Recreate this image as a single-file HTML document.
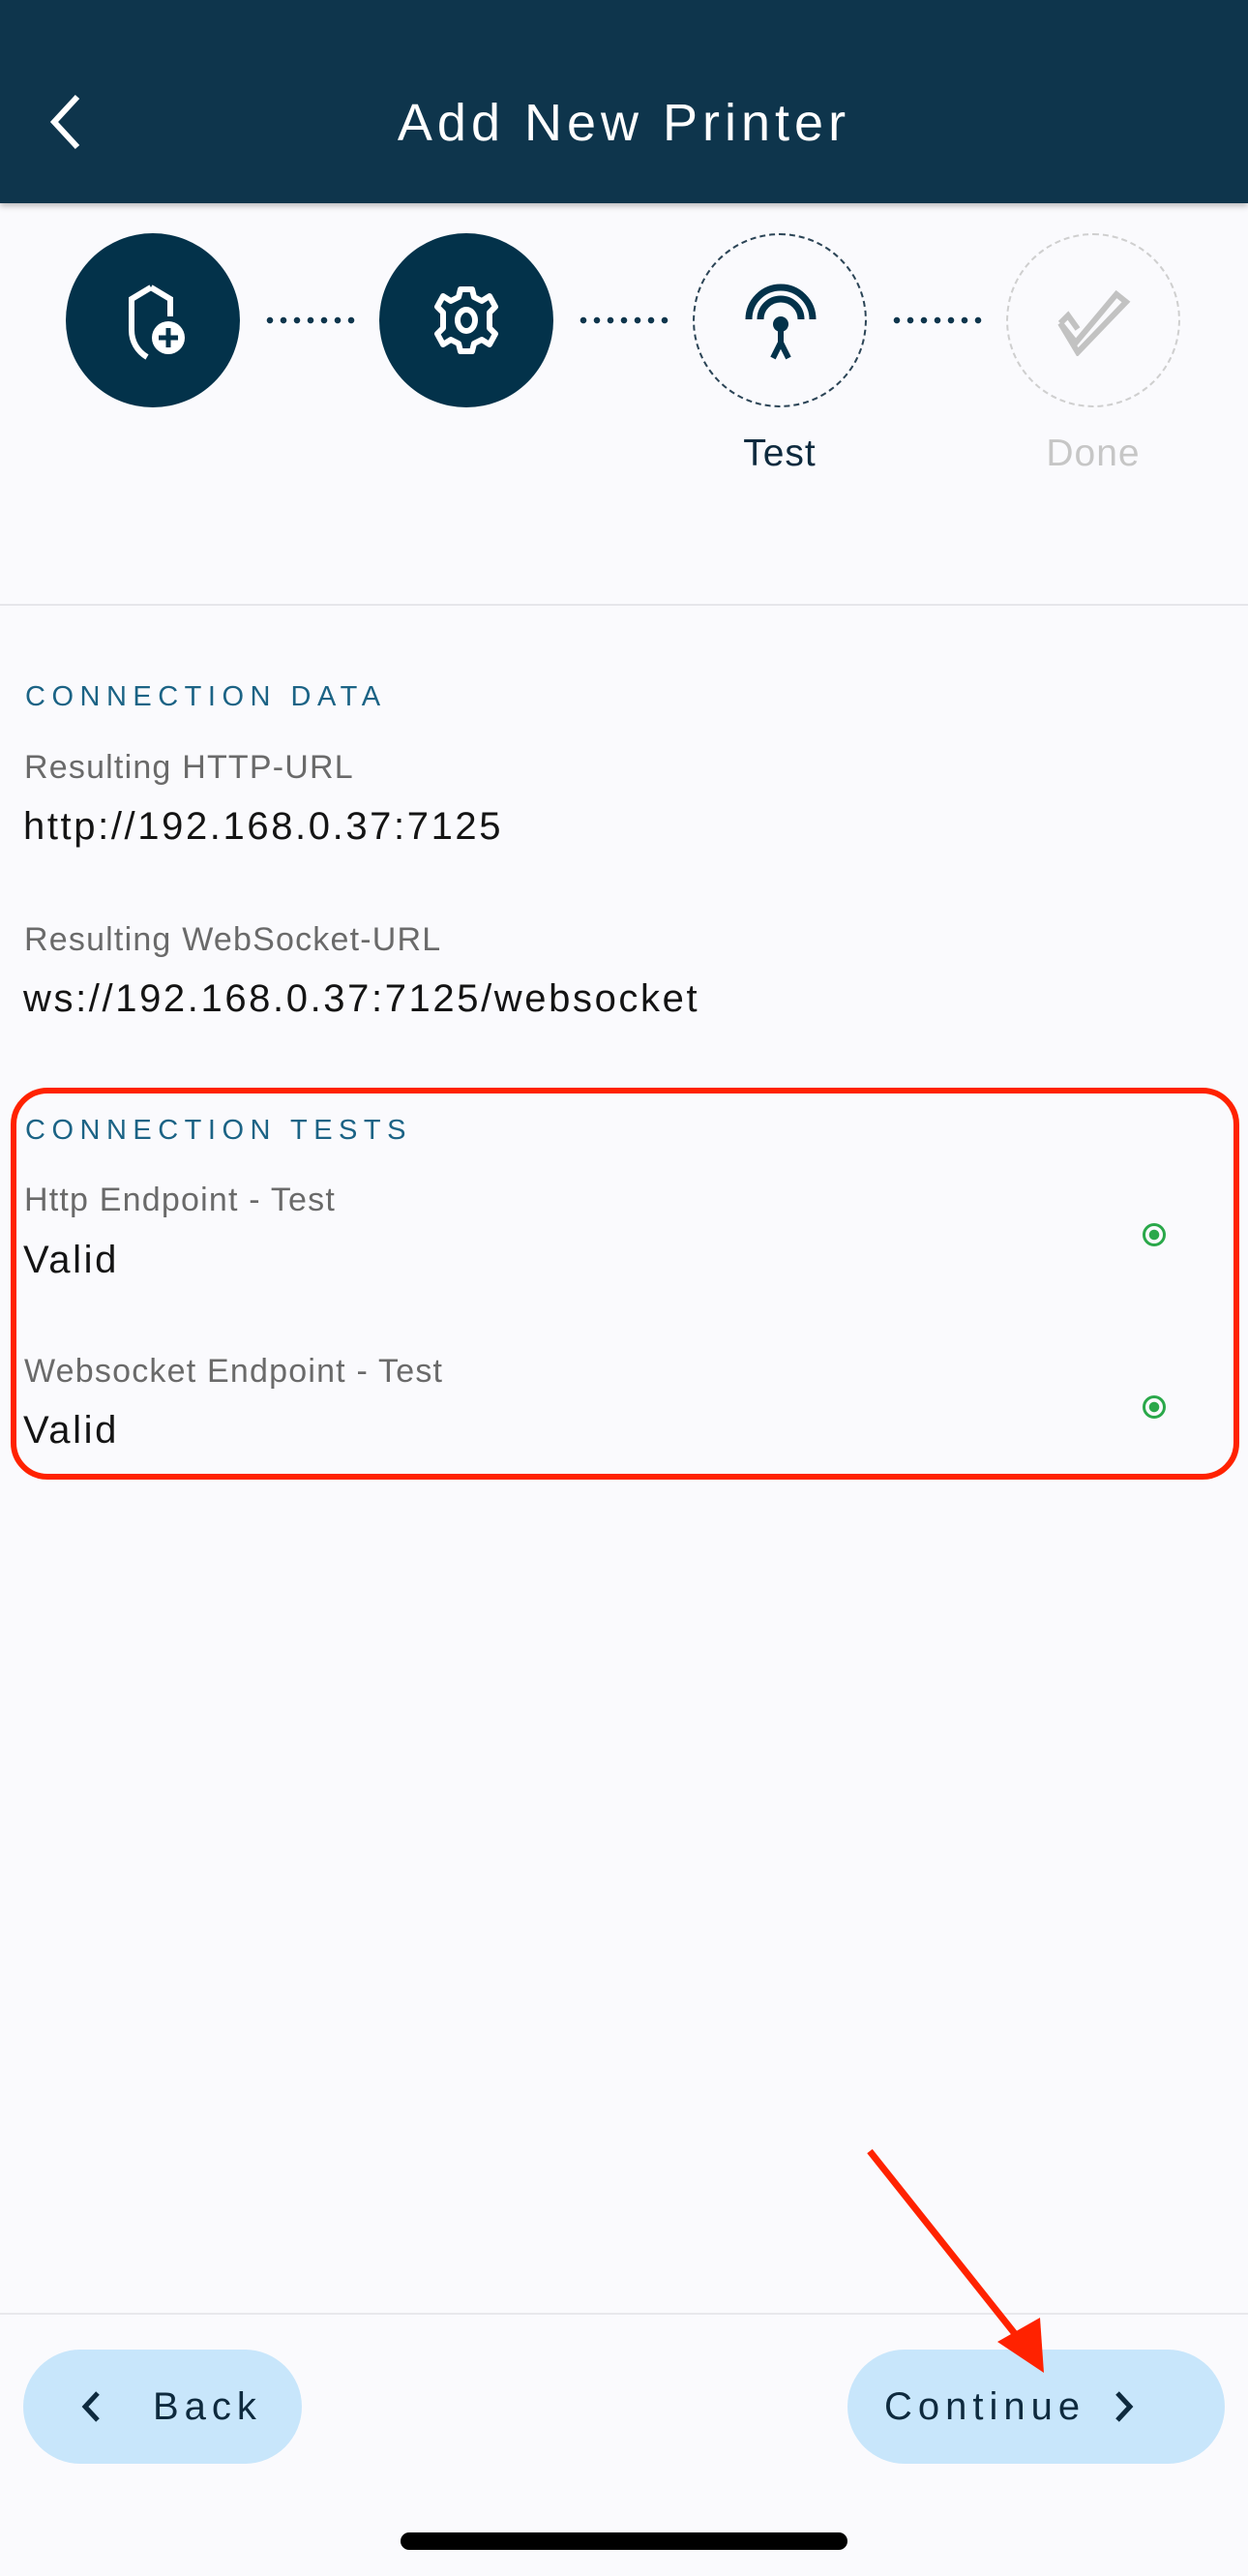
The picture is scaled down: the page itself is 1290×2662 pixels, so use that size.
<!DOCTYPE html>
<html><head><meta charset="utf-8">
<style>
*{margin:0;padding:0;box-sizing:border-box}
body{width:1290px;height:2662px;background:#fafafd;font-family:"Liberation Sans",sans-serif;position:relative;overflow:hidden}
.abs{position:absolute}
.hdr{left:0;top:0;width:1290px;height:210px;background:#0e354c;box-shadow:0 3px 6px rgba(0,0,0,.25)}
.title{left:0;width:1290px;top:96px;text-align:center;color:#fff;font-size:54px;line-height:62px;letter-spacing:5px}
.circ{width:180px;height:180px;border-radius:50%;top:241px}
.dots{top:327px;width:100px;height:8px;background:radial-gradient(circle,#0e354c 3px,transparent 3.5px) 0 0/14px 8px repeat-x}
.lbl{top:446px;width:200px;text-align:center;font-size:39px;line-height:46px;letter-spacing:1px}
.sec{left:26px;color:#1b6385;font-size:29px;letter-spacing:6.5px;line-height:34px}
.k{left:25px;color:#6a6a6a;font-size:34px;line-height:40px;letter-spacing:1.2px}
.v{left:24px;color:#141414;font-size:40px;line-height:48px;letter-spacing:2.6px}
.dot{left:1181px;width:24px;height:24px;border-radius:50%;border:3px solid #2aa84a;background:radial-gradient(circle,#2aa84a 5px,transparent 5.5px)}
.btn{top:2428px;height:118px;border-radius:59px;background:#c8e6fb;color:#0e2a3e;font-size:40px;letter-spacing:6px;display:flex;align-items:center}
</style></head><body>
<div class="abs hdr"></div>
<svg class="abs" style="left:44px;top:96px" width="44" height="60" viewBox="0 0 44 60"><path d="M36 4 L12 30 L36 56" stroke="#fff" stroke-width="6" fill="none"/></svg>
<div class="abs title">Add New Printer</div>

<div class="abs circ" style="left:68px;background:#03324a"></div>
<svg class="abs" style="left:128px;top:293px" width="70" height="80" viewBox="0 0 70 80">
<path d="M28 4 L8 16 V48 C8 60 14 70 24 76" stroke="#fff" stroke-width="6" fill="none"/>
<path d="M28 4 L48 16 V34" stroke="#fff" stroke-width="6" fill="none"/>
<circle cx="46" cy="56" r="17" fill="#fff"/>
<path d="M46 46 V66 M36 56 H56" stroke="#03324a" stroke-width="5"/>
</svg>
<div class="abs dots" style="left:272px"></div>
<div class="abs circ" style="left:392px;background:#03324a"></div>
<svg class="abs" style="left:448px;top:295px" width="68" height="72" viewBox="0 0 68 72">
<g transform="translate(34 36)" fill="none" stroke="#fff" stroke-width="6" stroke-linejoin="round">
<path d="M-6 -32 H6 L8 -24 L16 -20 L24 -25 L30 -14 L24 -8 V8 L30 14 L24 25 L16 20 L8 24 L6 32 H-6 L-8 24 L-16 20 L-24 25 L-30 14 L-24 8 V-8 L-30 -14 L-24 -25 L-16 -20 L-8 -24 Z"/>
<ellipse cx="0" cy="0" rx="9" ry="11"/>
</g></svg>
<div class="abs dots" style="left:596px"></div>
<div class="abs circ" style="left:716px;border:2px dashed #2b4456"></div>
<svg class="abs" style="left:770px;top:290px" width="74" height="88" viewBox="0 0 74 88">
<path d="M4 40 A33 33 0 0 1 70 40" stroke="#03324a" stroke-width="7" fill="none"/>
<path d="M16 40 A21 21 0 0 1 58 40" stroke="#03324a" stroke-width="7" fill="none"/>
<circle cx="37" cy="45" r="8" fill="#03324a"/>
<path d="M37 50 V66 M37 64 L29 80 M37 64 L45 80" stroke="#03324a" stroke-width="6" fill="none"/>
</svg>
<div class="abs dots" style="left:920px"></div>
<div class="abs circ" style="left:1040px;border:2px dashed #cfcfcf"></div>
<svg class="abs" style="left:1088px;top:296px" width="84" height="72" viewBox="0 0 84 72">
<path d="M8 38 L24 58 L66 8 L76 16 L26 68 Z M8 38 L16 30 L26 44" stroke="#c2c2c2" stroke-width="6" fill="none" stroke-linejoin="miter"/>
</svg>
<div class="abs lbl" style="left:706px;color:#0e2a3e">Test</div>
<div class="abs lbl" style="left:1030px;color:#c6c6c6">Done</div>

<div class="abs" style="left:0;top:624px;width:1290px;height:2px;background:#e6e6ea"></div>

<div class="abs sec" style="top:703px">CONNECTION DATA</div>
<div class="abs k" style="top:773px">Resulting HTTP-URL</div>
<div class="abs v" style="top:830px">http://192.168.0.37:7125</div>
<div class="abs k" style="top:951px">Resulting WebSocket-URL</div>
<div class="abs v" style="top:1008px">ws://192.168.0.37:7125/websocket</div>

<div class="abs" style="left:11px;top:1124px;width:1270px;height:405px;border:6px solid #ff2200;border-radius:38px"></div>
<div class="abs sec" style="top:1151px">CONNECTION TESTS</div>
<div class="abs k" style="top:1220px">Http Endpoint - Test</div>
<div class="abs v" style="top:1278px">Valid</div>
<div class="abs dot" style="top:1264px"></div>
<div class="abs k" style="top:1397px">Websocket Endpoint - Test</div>
<div class="abs v" style="top:1454px">Valid</div>
<div class="abs dot" style="top:1442px"></div>

<div class="abs" style="left:0;top:2390px;width:1290px;height:2px;background:#e8e8ec"></div>
<div class="abs btn" style="left:24px;width:288px">
<svg style="margin-left:58px" width="24" height="36" viewBox="0 0 24 36"><path d="M19 4 L6 18 L19 32" stroke="#0e2a3e" stroke-width="5" fill="none"/></svg>
<span style="margin-left:52px">Back</span></div>
<div class="abs btn" style="left:876px;width:390px">
<span style="margin-left:38px">Continue</span>
<svg style="margin-left:28px" width="24" height="36" viewBox="0 0 24 36"><path d="M5 4 L18 18 L5 32" stroke="#0e2a3e" stroke-width="5" fill="none"/></svg></div>

<svg class="abs" style="left:0;top:0" width="1290" height="2662">
<line x1="899" y1="2223" x2="1062" y2="2428" stroke="#ff2200" stroke-width="7"/>
<polygon points="1075,2395 1079,2452 1031,2420" fill="#ff2200"/>
</svg>
<div class="abs" style="left:414px;top:2617px;width:462px;height:18px;border-radius:9px;background:#000"></div>
</body></html>
